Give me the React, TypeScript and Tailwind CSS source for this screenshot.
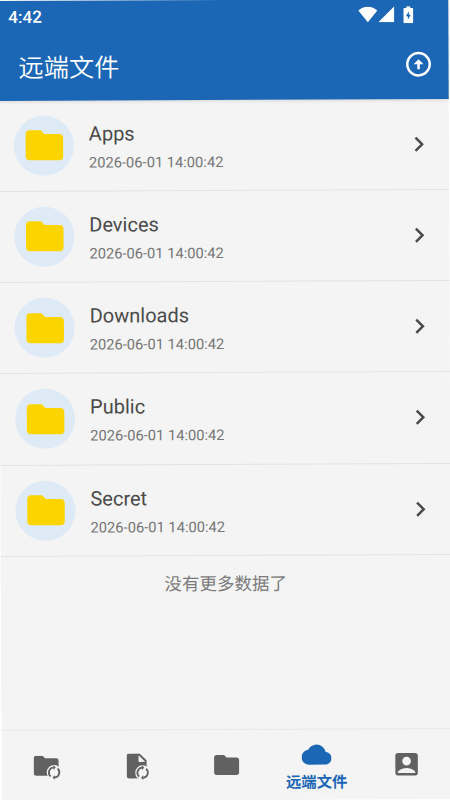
import { MdAccountBox, MdChevronRight, MdCloud, MdFolder, MdOutlineArrowCircleUp } from "react-icons/md"

export default function App() {
  return (
    <div className="h-[800px] w-[450px] overflow-hidden bg-white font-[Roboto,'Noto_Sans_CJK_SC',sans-serif]">
      <div className="flex h-full w-full rotate-[-0.25deg] flex-col bg-[#f4f4f4]">
        {/* Header */}
        <header className="h-[99.5px] shrink-0 bg-[#1b67b5] text-white shadow-[0_1px_4px_rgb(0_0_0_/_12%)]">
          <div className="flex h-[30px] items-center justify-between pl-2.5 pr-[35px]">
            <span className="pt-px text-[17px] font-medium leading-8">4:42</span>
            <div className="flex items-center">
              <WifiIcon />
              <SignalIcon />
              <BatteryIcon />
            </div>
          </div>
          <div className="flex h-[70px] items-center justify-between pl-5 pr-[15px]">
            <h1 className="pt-[5px] text-[25.2px] font-[350] leading-none">远端文件</h1>
            <MdOutlineArrowCircleUp className="size-[30px]" />
          </div>
        </header>

        {/* File list */}
        <main className="flex-1">
          {folders.map((folder) => (
            <div key={folder.name} className="flex h-[91.25px] items-center border-b-[1.5px] border-[#e2e2e2] pl-[15px] pr-[15px]">
              <div className="flex size-[60px] items-center justify-center rounded-full bg-[#dfeaf7]">
                <MdFolder className="size-[45px] text-[#fcd500]" />
              </div>
              <div className="ml-[15px] flex-1 pt-[5px]">
                <p className="text-[20px] leading-7 text-[#4a4a4a]">{folder.name}</p>
                <p className="pt-px text-[14.7px] leading-7 text-[#757575]">{folder.modified}</p>
              </div>
              <MdChevronRight className="size-[30px] text-[#4a4a4a]" />
            </div>
          ))}
          <p className="pt-3.5 text-center text-[17.5px] leading-7 text-[#7b7b7b]">没有更多数据了</p>
        </main>

        {/* Bottom navigation */}
        <nav className="grid h-[71px] shrink-0 grid-cols-5 items-center border-t-[1.5px] border-[#e9e9e9] text-[#616161]">
          <FolderSyncIcon />
          <FileSyncIcon />
          <MdFolder className="mx-auto size-[30px]" />
          <div className="flex flex-col items-center pt-[5px] text-[#1b67b5]">
            <MdCloud className="size-[30px]" />
            <span className="text-[15.4px] font-bold leading-[26px]">远端文件</span>
          </div>
          <MdAccountBox className="mx-auto size-[30px]" />
        </nav>
      </div>
    </div>
  )
}

function WifiIcon() {
  return (
    <svg viewBox="0 0 19 16" className="h-4 w-[19px]" fill="currentColor">
      <path d="M9.5 16 0 4.2C2.6 1.6 5.8.3 9.5.3S16.4 1.6 19 4.2z" />
    </svg>
  )
}

function SignalIcon() {
  return (
    <svg viewBox="0 0 16 16" className="ml-[1.5px] h-4 w-4" fill="currentColor">
      <path d="M16 0v16H0z" />
    </svg>
  )
}

function BatteryIcon() {
  return (
    <svg viewBox="0 0 10 17" className="ml-[9px] h-[17px] w-2.5" fill="currentColor">
      <path d="M3 0h4v1.7h2a1 1 0 0 1 1 1V16a1 1 0 0 1-1 1H1a1 1 0 0 1-1-1V2.7a1 1 0 0 1 1-1h2z" />
      <path d="M5.6 5 2.5 10h2v3.6l3-5H5.6z" fill="#1b67b5" />
    </svg>
  )
}

// two curved arrows on a cut-out disc, centred on 0,0
function SyncBadge() {
  return (
    <g>
      <circle r="7.4" fill="#f4f4f4" />
      <g fill="none" stroke="currentColor" strokeWidth="1.8">
        <path d="M-3.5 3.9A5.1 5.1 0 0 1-.5-5" />
        <path d="M3.5-3.9A5.1 5.1 0 0 1 .5 5" />
      </g>
      <path d="M-.7-7.3v4.6l2.4-2.3zM.7 7.3V2.7L-1.7 5z" fill="currentColor" />
    </g>
  )
}

function FolderSyncIcon() {
  return (
    <svg viewBox="0 0 28 25" className="mx-auto mt-1 h-[25px] w-7 translate-x-px" fill="currentColor">
      <path d="M2.5 0H9l2.5 2.5h11A2.5 2.5 0 0 1 25 5v15H2.5A2.5 2.5 0 0 1 0 17.5v-15A2.500 2.500 0 0 1 2.500 0z" />
      <g transform="translate(20.5 16.7)">
        <SyncBadge />
      </g>
    </svg>
  )
}

function FileSyncIcon() {
  return (
    <svg viewBox="0 0 23 27" className="mx-auto mt-0.5 h-[27px] w-[23px] translate-x-px" fill="currentColor">
      <path d="M2.5 0H13l7 7v18H2.5A2.5 2.5 0 0 1 0 22.5v-20A2.5 2.5 0 0 1 2.5 0z" />
      <path d="M12 1.900v6.600h6.600z" fill="#f4f4f4" />
      <g transform="translate(16 19.3)">
        <SyncBadge />
      </g>
    </svg>
  )
}

const folders = [
  { name: "Apps", modified: "2026-06-01 14:00:42" },
  { name: "Devices", modified: "2026-06-01 14:00:42" },
  { name: "Downloads", modified: "2026-06-01 14:00:42" },
  { name: "Public", modified: "2026-06-01 14:00:42" },
  { name: "Secret", modified: "2026-06-01 14:00:42" },
]
